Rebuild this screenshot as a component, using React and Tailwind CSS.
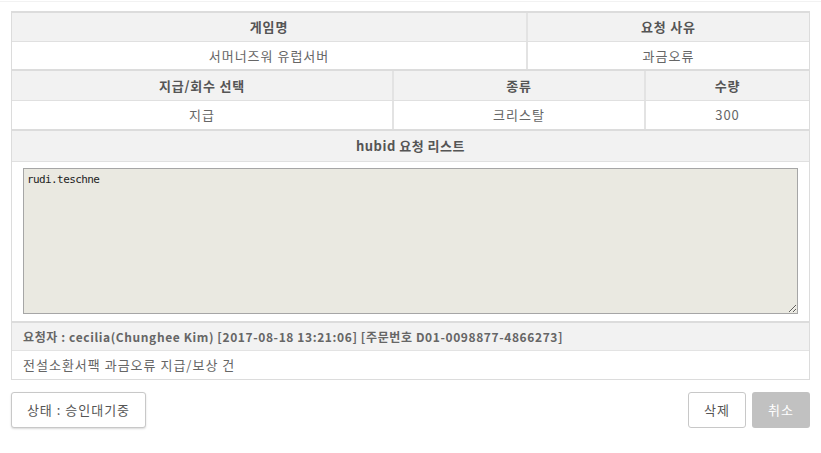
function Cell({ children, className = '' }) {
  return <div className={`flex items-center justify-center ${className}`}>{children}</div>;
}

export default function App() {
  return (
    <div className="w-[821px] h-[453px] bg-white font-['Noto_Sans_CJK_KR',sans-serif]">
      <div className="mt-px border-t border-[#f2f2f2] px-[11px] pt-[9px]">
        {/* 게임명 / 요청 사유 */}
        <div className="border-x border-t-2 border-[#dcdcdc]">
          <div className="flex h-[29px] bg-[#f2f2f2] border-b border-[#e0e0e0] text-[13px] font-bold text-[#555] tracking-[0.8px]">
            <Cell className="w-[516px] border-r-2 border-[#e3e3e3]">게임명</Cell>
            <Cell className="flex-1">요청 사유</Cell>
          </div>
          <div className="flex h-[27px] text-[13px] text-[#666] tracking-[1px]">
            <Cell className="w-[516px] border-r-2 border-[#e3e3e3]">서머너즈워 유럽서버</Cell>
            <Cell className="flex-1">과금오류</Cell>
          </div>
        </div>

        {/* 지급/회수 */}
        <div className="border-x border-t-2 border-[#dcdcdc]">
          <div className="flex h-[30px] bg-[#f2f2f2] border-b border-[#e0e0e0] text-[13px] font-bold text-[#555] tracking-[0.8px]">
            <Cell className="w-[382px] border-r-2 border-[#e3e3e3]">지급/회수 선택</Cell>
            <Cell className="w-[252px] border-r-2 border-[#e3e3e3]">종류</Cell>
            <Cell className="flex-1">수량</Cell>
          </div>
          <div className="flex h-[28px] text-[13px] text-[#666] tracking-[1px]">
            <Cell className="w-[382px] border-r-2 border-[#e3e3e3]">지급</Cell>
            <Cell className="w-[252px] border-r-2 border-[#e3e3e3]">크리스탈</Cell>
            <Cell className="flex-1">300</Cell>
          </div>
        </div>

        {/* hubid 리스트 */}
        <div className="border-x border-b border-t-2 border-[#dcdcdc]">
          <div className="flex h-[31px] bg-[#f2f2f2] border-b border-[#e0e0e0] text-[13px] font-bold text-[#555] tracking-[0.5px]">
            <Cell className="flex-1">hubid 요청 리스트</Cell>
          </div>
          <div className="px-[11px] pt-[6px] pb-[7px] border-b-2 border-[#dcdcdc]">
            <textarea
              readOnly
              defaultValue="rudi.teschne"
              className="block w-full h-[146px] bg-[#eae9e1] border border-[#a6a6a6] px-[3px] py-[3px] text-[11px] leading-[15px] tracking-[-0.6px] text-[#222] font-['DejaVu_Sans_Mono',monospace] outline-none"
            />
          </div>
          <div className="flex items-center h-[28px] px-[11px] bg-[#f2f2f2] border-b border-[#e3e3e3] text-[12px] font-bold text-[#666] tracking-[0.6px]">
            요청자 : cecilia(Chunghee Kim) [2017-08-18 13:21:06] [주문번호 D01-0098877-4866273]
          </div>
          <div className="flex items-center h-[28px] px-[11px] text-[13px] text-[#666] tracking-[1px]">
            전설소환서팩 과금오류 지급/보상 건
          </div>
        </div>

        {/* buttons */}
        <div className="flex items-center justify-between mt-[12px]">
          <button className="h-[36px] w-[135px] rounded-[3px] border border-[#c8c8c8] bg-white text-[13px] text-[#555] tracking-[1px] shadow-[0_1px_2px_rgba(0,0,0,0.15)]">
            상태 : 승인대기중
          </button>
          <div className="flex gap-[6px]">
            <button className="h-[36px] w-[58px] rounded-[3px] border border-[#c8c8c8] bg-white text-[13px] text-[#555] tracking-[1px]">
              삭제
            </button>
            <button className="h-[36px] w-[58px] rounded-[3px] bg-[#c1c1c1] text-[13px] text-white tracking-[1px]">
              취소
            </button>
          </div>
        </div>
      </div>
    </div>
  );
}
